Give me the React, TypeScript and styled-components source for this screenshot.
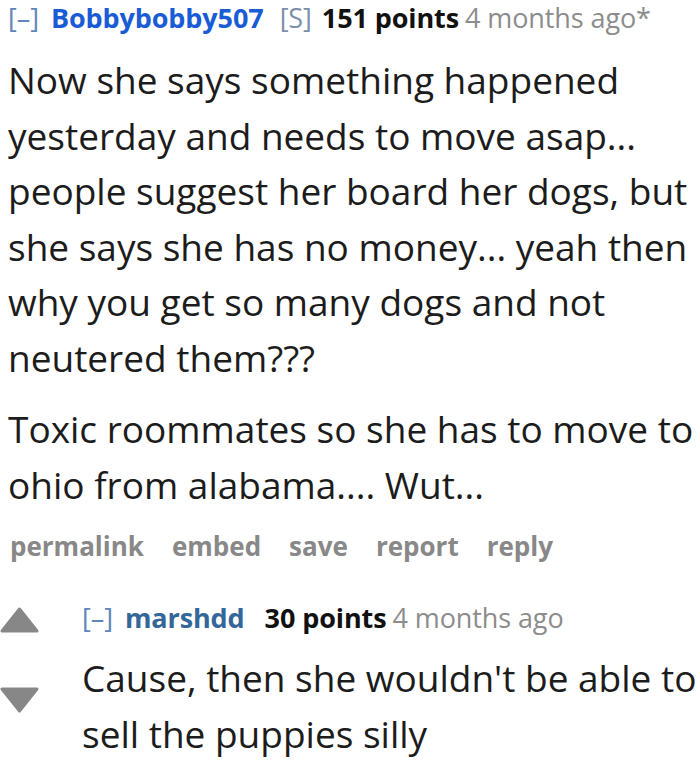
import styled, { createGlobalStyle } from "styled-components";

const GlobalStyle = createGlobalStyle`
  body {
    margin: 0;
    background: #ffffff;
    font-family: "Open Sans", "Noto Sans", sans-serif;
  }
`;

const Thread = styled.div`
  padding: 0 0 0 8px;
  width: 700px;
  box-sizing: border-box;
  overflow: hidden;
`;

const Tagline = styled.div`
  display: flex;
  align-items: baseline;
  gap: 10px;
  font-size: 27px;
  line-height: 36px;
  letter-spacing: -0.1px;
  white-space: nowrap;
`;

const Expand = styled.span`
  color: #5f86b8;
  font-weight: 400;
  margin-right: 12px;
`;

const Author = styled.span<{ $color: string }>`
  color: ${(p) => p.$color};
  font-weight: 700;
`;

const Flair = styled.span`
  color: #7b8fa8;
  margin-left: 6px;
`;

const Score = styled.span<{ $gap?: number }>`
  color: #111;
  font-weight: 700;
  margin-left: ${(p) => p.$gap ?? 0}px;
`;

const Time = styled.span`
  color: #8c8c8c;
  margin-left: -4px;
`;

const Body = styled.div`
  color: #1c1c1c;
  font-size: 37px;
  line-height: 55.5px;
  letter-spacing: 0;
  white-space: nowrap;
  margin-top: 16px;
  p {
    margin: 0 0 16px 0;
  }
`;

const Actions = styled.ul`
  display: flex;
  gap: 28px;
  list-style: none;
  margin: 0 0 0 2px;
  padding: 0;
  font-size: 26px;
  line-height: 36px;
  font-weight: 700;
  color: #888888;
`;

const Child = styled.div`
  display: grid;
  grid-template-columns: 82px 1fr;
  margin: 36px 0 0 -8px;
`;

const Votes = styled.div`
  display: flex;
  flex-direction: column;
  gap: 54px;
  padding-top: 7px;
`;

const Content = styled.div`
  display: flex;
  flex-direction: column;
  & > div:last-child {
    margin-top: 14px;
  }
`;

const Arrow = ({ down }: { down?: boolean }) => (
  <svg width="40" height="26" viewBox="0 0 40 26">
    <path
      d={down ? "M2 2 L37 2 L19.5 24 Z" : "M2 24 L37 24 L19.5 2 Z"}
      fill="#878787"
      stroke="#878787"
      strokeWidth="3"
      strokeLinejoin="round"
    />
  </svg>
);

export default function App() {
  return (
    <Thread>
      <GlobalStyle />
      <Tagline>
        <span>
          <Expand>[–]</Expand>
          <Author $color="#1a5bd6">Bobbybobby507</Author>
        </span>
        <Flair>[S]</Flair>
        <Score>151 points</Score>
        <Time>4 months ago*</Time>
      </Tagline>
      <Body>
        <p>
          Now she says something happened
          <br />
          yesterday and needs to move asap...
          <br />
          people suggest her board her dogs, but
          <br />
          she says she has no money... yeah then
          <br />
          why you get so many dogs and not
          <br />
          neutered them???
        </p>
        <p>
          Toxic roommates so she has to move to
          <br />
          ohio from alabama.... Wut...
        </p>
      </Body>
      <Actions>
        <li>permalink</li>
        <li>embed</li>
        <li>save</li>
        <li>report</li>
        <li>reply</li>
      </Actions>
      <Child>
        <Votes>
          <Arrow />
          <Arrow down />
        </Votes>
        <Content>
          <Tagline>
            <span>
              <Expand>[–]</Expand>
              <Author $color="#336699">marshdd</Author>
            </span>
            <Score $gap={10}>30 points</Score>
            <Time>4 months ago</Time>
          </Tagline>
          <Body>
            <p>
              Cause, then she wouldn't be able to
              <br />
              sell the puppies silly
            </p>
          </Body>
        </Content>
      </Child>
    </Thread>
  );
}
